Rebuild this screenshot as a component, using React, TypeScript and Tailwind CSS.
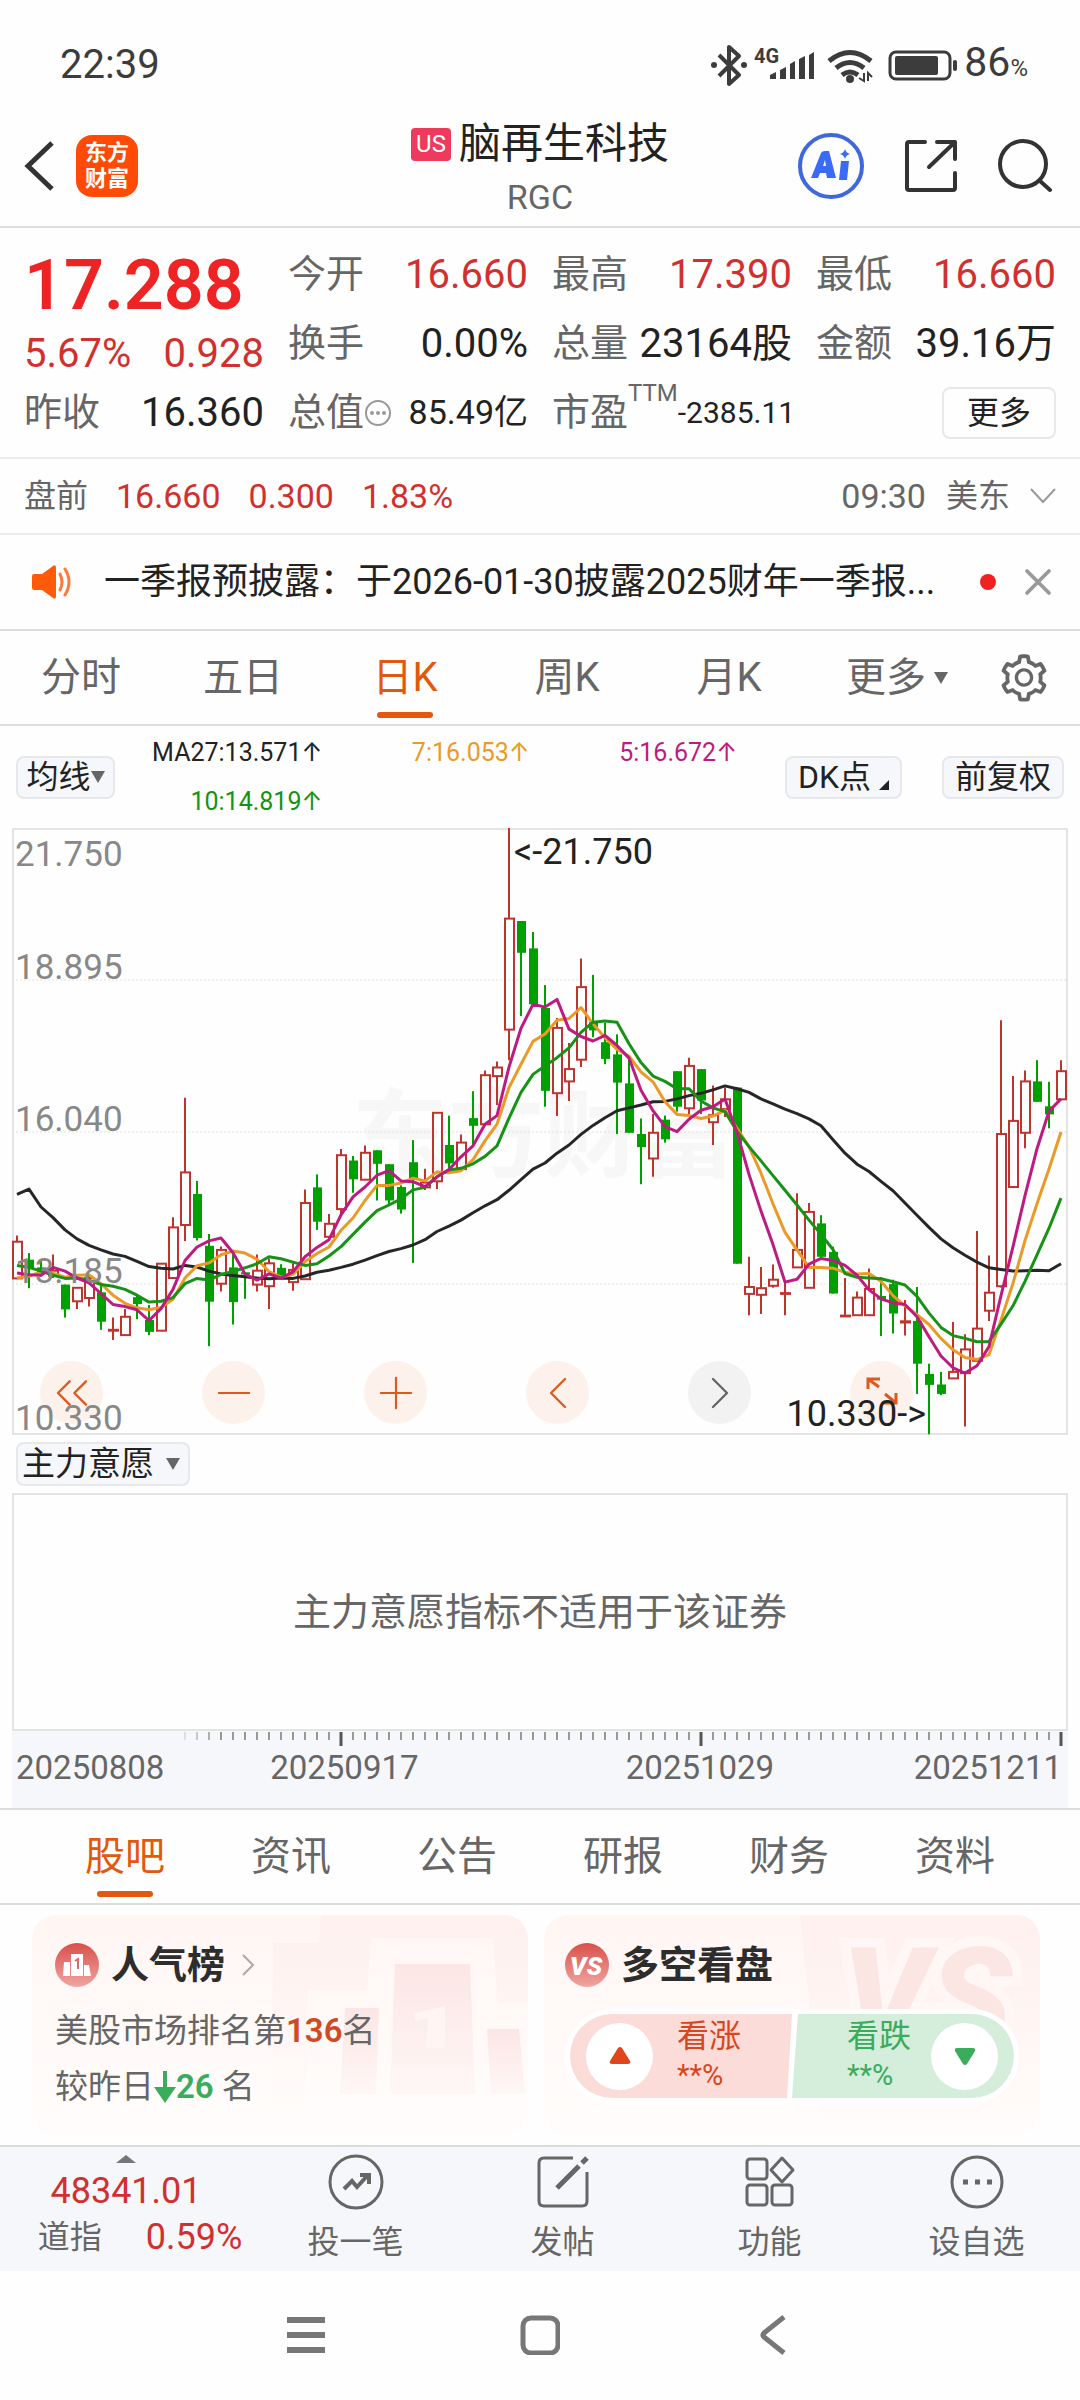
import React from "react";
import { ChevronLeft, ChevronRight, ChevronsLeft, Minus, Plus, X } from "lucide-react";
import { AiOutlineSetting } from "react-icons/ai";

type Candle = ["up" | "down", number, number, number, number];

// kind, high, body top, body bottom, low (chart levels, counted down from the top rule)
const CANDLES: Candle[] = [
  ["up", 1018, 1033, 1123, 1123], ["down", 1061, 1077, 1098, 1147], ["down", 1078, 1096, 1112, 1118],
  ["up", 1064, 1104, 1116, 1122], ["down", 1138, 1138, 1199, 1219], ["up", 1146, 1146, 1179, 1198],
  ["up", 1117, 1122, 1171, 1192], ["down", 1140, 1157, 1229, 1249], ["up", 1219, 1249, 1251, 1274],
  ["up", 1198, 1217, 1262, 1262], ["down", 1163, 1169, 1186, 1223], ["down", 1188, 1225, 1254, 1262],
  ["up", 1087, 1087, 1251, 1251], ["up", 973, 998, 1122, 1122], ["up", 680, 863, 992, 1031],
  ["down", 884, 916, 1024, 1030], ["down", 1014, 1043, 1180, 1289], ["up", 1045, 1053, 1136, 1155],
  ["down", 1064, 1096, 1181, 1236], ["down", 1109, 1108, 1113, 1173], ["up", 1064, 1104, 1138, 1155],
  ["up", 1074, 1086, 1142, 1198], ["down", 1088, 1097, 1117, 1122], ["up", 1086, 1102, 1132, 1153],
  ["up", 905, 938, 1125, 1125], ["down", 868, 900, 984, 1004], ["up", 965, 989, 1021, 1021],
  ["up", 806, 821, 953, 965], ["down", 823, 834, 880, 913], ["up", 797, 815, 881, 881],
  ["down", 809, 809, 842, 932], ["down", 843, 843, 932, 943], ["down", 895, 899, 954, 964],
  ["down", 784, 838, 878, 1085], ["up", 854, 888, 900, 906], ["up", 717, 717, 885, 904],
  ["down", 724, 796, 841, 856], ["up", 770, 790, 855, 858], ["down", 664, 730, 749, 800],
  ["up", 613, 625, 745, 745], ["up", 591, 606, 627, 698], ["up", 19, 241, 513, 588],
  ["down", 247, 247, 325, 480], ["down", 274, 314, 451, 451], ["down", 404, 460, 663, 702],
  ["up", 485, 509, 669, 725], ["up", 546, 610, 640, 688], ["up", 339, 409, 587, 605],
  ["down", 379, 495, 515, 532], ["down", 497, 544, 585, 598], ["down", 525, 574, 643, 769],
  ["down", 585, 645, 766, 766], ["down", 731, 769, 801, 892], ["up", 720, 766, 829, 874],
  ["down", 724, 734, 782, 790], ["down", 615, 615, 702, 714], ["up", 582, 602, 706, 722],
  ["down", 610, 610, 687, 720], ["up", 650, 723, 740, 796], ["up", 655, 684, 708, 727],
  ["down", 655, 655, 1087, 1087], ["up", 1070, 1144, 1161, 1213], ["up", 1095, 1147, 1163, 1210],
  ["up", 1089, 1126, 1141, 1146], ["up", 1132, 1159, 1161, 1213], ["up", 914, 1053, 1096, 1096],
  ["up", 938, 960, 1146, 1146], ["down", 968, 988, 1070, 1070], ["down", 1045, 1058, 1160, 1160],
  ["up", 1122, 1214, 1216, 1217], ["up", 1155, 1170, 1213, 1213], ["up", 1099, 1149, 1213, 1213],
  ["down", 1120, 1166, 1175, 1264], ["down", 1126, 1137, 1209, 1258], ["up", 1176, 1228, 1231, 1263],
  ["down", 1144, 1227, 1332, 1406], ["down", 1332, 1357, 1384, 1505], ["down", 1352, 1383, 1406, 1409],
  ["up", 1230, 1352, 1368, 1368], ["up", 1260, 1297, 1355, 1486], ["up", 1007, 1246, 1325, 1325],
  ["up", 1067, 1158, 1202, 1227], ["up", 490, 769, 1142, 1145], ["up", 627, 737, 899, 899],
  ["up", 613, 640, 766, 804], ["down", 588, 640, 690, 690], ["down", 641, 701, 721, 755],
  ["up", 588, 615, 684, 684],
];

const MA27 = [
  917, 904, 948, 974, 1004, 1026, 1042, 1053, 1063, 1069, 1081, 1094, 1098, 1100, 1091, 1095, 1105, 1112, 1116, 1119,
  1122, 1124, 1122, 1123, 1117, 1108, 1103, 1096, 1088, 1078, 1067, 1057, 1050, 1041, 1028, 1008, 995, 980, 962, 945,
  930, 907, 881, 855, 840, 816, 796, 770, 748, 729, 712, 705, 698, 690, 689, 683, 675, 669, 661, 651,
  658, 667, 683, 695, 708, 719, 732, 749, 783, 816, 843, 861, 885, 908, 938, 968, 998, 1026, 1048, 1066,
  1083, 1097, 1101, 1105, 1104, 1103, 1104, 1087,
];

const MA5 = [
  1110, 1114, 1115, 1096, 1105, 1122, 1134, 1160, 1187, 1192, 1200, 1226, 1197, 1150, 1079, 1046, 1031, 1024, 1060, 1112,
  1127, 1112, 1122, 1107, 1070, 1047, 1028, 967, 923, 899, 870, 859, 884, 886, 898, 874, 856, 825, 798, 745,
  724, 605, 510, 451, 458, 439, 512, 530, 541, 527, 552, 583, 662, 712, 751, 763, 733, 711, 702, 683,
  765, 868, 958, 1040, 1132, 1125, 1088, 1074, 1079, 1091, 1115, 1151, 1173, 1183, 1187, 1217, 1266, 1313, 1342, 1355,
  1337, 1290, 1165, 1045, 920, 805, 713, 683,
];

const MA7 = [
  1122, 1117, 1108, 1110, 1120, 1115, 1114, 1136, 1164, 1184, 1195, 1200, 1194, 1174, 1122, 1092, 1085, 1065, 1056, 1061,
  1076, 1106, 1120, 1113, 1082, 1062, 1046, 1005, 975, 932, 895, 895, 889, 877, 884, 862, 864, 859, 832, 786,
  745, 655, 598, 542, 524, 490, 486, 459, 499, 533, 562, 578, 617, 641, 690, 721, 724, 731, 725, 711,
  755, 800, 865, 940, 1010, 1053, 1096, 1096, 1098, 1108, 1112, 1111, 1130, 1165, 1190, 1212, 1236, 1270, 1298, 1317,
  1322, 1310, 1225, 1135, 1030, 940, 855, 764,
];

const MA10 = [
  1091, 1096, 1105, 1115, 1123, 1122, 1127, 1138, 1142, 1150, 1164, 1181, 1179, 1170, 1136, 1123, 1127, 1113, 1106, 1097,
  1087, 1070, 1075, 1083, 1091, 1087, 1068, 1045, 1015, 985, 957, 943, 928, 906, 900, 874, 857, 853, 842, 824,
  798, 730, 667, 623, 602, 582, 558, 520, 495, 492, 495, 548, 594, 627, 640, 658, 658, 688, 705, 714,
  762, 800, 835, 871, 907, 943, 980, 1015, 1052, 1111, 1120, 1122, 1124, 1131, 1139, 1167, 1208, 1243, 1263, 1270,
  1278, 1278, 1235, 1190, 1130, 1065, 1000, 926,
];

const AXIS_LABELS = [
  { y: 38, text: "21.750" },
  { y: 151, text: "18.895" },
  { y: 303, text: "16.040" },
  { y: 455, text: "13.185" },
  { y: 602, text: "10.330" },
];

const RED = "#be3530";

const xAt = (i: number) => 5 + i * 12;
const yAt = (level: number) => Math.round((level - 19) * 4.08) / 10;
const toPoints = (levels: number[]) => levels.map((v, i) => `${xAt(i)},${yAt(v)}`).join(" ");

function StatusBar() {
  return (
    <div className="flex h-[130px] items-center justify-between pl-[60px] pr-[52px] text-[#3c3c3c]">
      <span className="text-[40px]">22:39</span>
      <div className="flex items-center">
        <svg viewBox="0 0 250 44" className="h-11 w-[250px] fill-current" aria-hidden="true">
          <path d="M9 12 L29 32 L19 41 V4 L29 13 L9 33" fill="none" stroke="currentColor" strokeWidth="4" strokeLinejoin="round" />
          <circle cx="4" cy="22" r="3" />
          <circle cx="34" cy="22" r="3" />
          <text x="44" y="20" fontSize="20" fontWeight="700">4G</text>
          <path d="M60 36 V32 L66 29 V36Z M70 36 V27 L76 24 V36Z M80 36 V21 L85 18 V36Z M89 36 V16 L95 13 V36Z M99 36 V12 L104 9 V36Z" />
          <g fill="none" stroke="currentColor" strokeWidth="5">
            <path d="M119 18 Q140 1 161 18" />
            <path d="M126 25 Q140 14 154 25" />
            <path d="M132 32 Q140 26 148 32" />
          </g>
          <circle cx="140" cy="36" r="4" />
          <path d="M154 30 V38 L149 35 M158 38 V30 L162 34" fill="none" stroke="currentColor" strokeWidth="2" />
          <rect x="180" y="9" width="60" height="27" rx="6" fill="none" stroke="currentColor" strokeWidth="3" />
          <rect x="185" y="13" width="43" height="19" rx="2" />
          <rect x="243" y="17" width="4" height="11" rx="2" />
        </svg>
        <span className="flex items-baseline pl-1 text-[41px] leading-[44px]">
          86<span className="text-[24px]">%</span>
        </span>
      </div>
    </div>
  );
}

function Header() {
  return (
    <header className="grid h-[98px] grid-cols-[1fr_auto_1fr] items-start border-b-2 border-[#dcdcdc]">
      <div className="flex items-center gap-[18px] pl-6 pt-[5px]">
        <button type="button" aria-label="返回" className="text-[#333]">
          <svg viewBox="0 0 34 54" className="h-[54px] w-[34px]" fill="none" stroke="currentColor" strokeWidth="5">
            <path d="M28 4 L4 27 L28 50" />
          </svg>
        </button>
        <a
          href="#home"
          className="flex h-[62px] w-[62px] flex-col items-center justify-center rounded-2xl bg-[#ff4b05] text-[22px] font-bold leading-[26px] text-white"
        >
          <span>东方</span>
          <span>财富</span>
        </a>
      </div>
      <div className="-mt-4 flex flex-col items-center">
        <h1 className="flex items-center gap-2 text-[42px] leading-[60px] text-[#222]">
          <span className="flex h-[33px] w-10 items-center justify-center rounded bg-[#ee3a5c] text-2xl text-white">US</span>
          脑再生科技
        </h1>
        <span className="text-[34px] leading-[46px] text-[#666]">RGC</span>
      </div>
      <div className="flex items-center justify-end gap-10 pr-7 pt-[3px]">
        <button type="button" aria-label="Ai">
          <svg viewBox="0 0 66 66" className="h-[66px] w-[66px]">
            <circle cx="33" cy="33" r="31" fill="none" stroke="#3f68dc" strokeWidth="4" />
            <path d="M13 45 L23 20 Q24 18 27 18 H31 L38 45 H29 L28 40 H22 L20 45Z M25 33 H28 L27 27Z" fill="#3a6bf5" fillRule="evenodd" />
            <path d="M43 28 H51 L49 47 H41Z M47 16 Q48 20 52 21 Q48 22 47 26 Q46 22 42 21 Q46 20 47 16Z" fill="#3a6bf5" />
          </svg>
        </button>
        <button type="button" aria-label="分享" className="text-[#333]">
          <svg viewBox="0 0 54 54" className="h-[54px] w-[54px]" fill="none" stroke="currentColor" strokeWidth="4" strokeLinecap="round" strokeLinejoin="round">
            <path d="M21 3 H5 Q3 3 3 5 V49 Q3 51 5 51 H49 Q51 51 51 49 V34" />
            <path d="M33 3 H51 V20 M51 3 L25 28" />
          </svg>
        </button>
        <button type="button" aria-label="搜索" className="text-[#333]">
          <svg viewBox="0 0 54 54" className="h-[54px] w-[54px]" fill="none" stroke="currentColor" strokeWidth="4" strokeLinecap="round">
            <circle cx="25" cy="25" r="23" />
            <path d="M42 42 L52 51" />
          </svg>
        </button>
      </div>
    </header>
  );
}

function Stat({ label, value, red }: { label: React.ReactNode; value: string; red?: boolean }) {
  return (
    <div className="flex h-[69px] items-center justify-between whitespace-nowrap">
      <span className="text-[38px] text-[#666]">{label}</span>
      <span className={red ? "text-[40px] text-[#d2302f]" : "text-[40px] text-[#222]"}>{value}</span>
    </div>
  );
}

function Quote() {
  return (
    <section className="grid grid-cols-4 gap-6 border-b-2 border-[#ececec] px-6 pb-[10px] pt-3">
      <div>
        <div className="flex h-[90px] items-center text-[70px] font-semibold text-[#ee2424]">17.288</div>
        <div className="flex h-12 items-center justify-between text-[40px] text-[#d2302f]">
          <span>5.67%</span>
          <span>0.928</span>
        </div>
        <Stat label="昨收" value="16.360" />
      </div>
      <div>
        <Stat label="今开" value="16.660" red />
        <Stat label="换手" value="0.00%" />
        <div className="flex h-[69px] items-center justify-between whitespace-nowrap">
          <span className="flex items-center text-[38px] text-[#666]">
            总值
            <svg viewBox="0 0 28 28" className="h-7 w-7" fill="#999">
              <circle cx="14" cy="14" r="12" fill="none" stroke="#999" strokeWidth="2" />
              <circle cx="8" cy="14" r="2" />
              <circle cx="14" cy="14" r="2" />
              <circle cx="20" cy="14" r="2" />
            </svg>
          </span>
          <span className="text-[34px] text-[#222]">85.49亿</span>
        </div>
      </div>
      <div>
        <Stat label="最高" value="17.390" red />
        <Stat label="总量" value="23164股" />
        <div className="flex h-[69px] items-center justify-between whitespace-nowrap">
          <span className="flex items-center text-[38px] text-[#666]">
            市盈<sup className="-top-5 text-2xl">TTM</sup>
          </span>
          <span className="text-[30px] text-[#222]">-2385.11</span>
        </div>
      </div>
      <div>
        <Stat label="最低" value="16.660" red />
        <Stat label="金额" value="39.16万" />
        <div className="flex h-[69px] items-center justify-end">
          <button type="button" className="h-[52px] w-[114px] rounded-lg border-2 border-[#e8e8e8] text-[32px] leading-none text-[#222]">
            更多
          </button>
        </div>
      </div>
    </section>
  );
}

function PreMarket() {
  return (
    <section className="flex h-[76px] items-center justify-between border-b-2 border-[#ececec] px-6 text-[34px] text-[#666]">
      <div className="flex items-center gap-7 text-[#d2302f]">
        <span className="text-[32px] text-[#666]">盘前</span>
        <span>16.660</span>
        <span>0.300</span>
        <span>1.83%</span>
      </div>
      <button type="button" className="flex items-center gap-5">
        <span>09:30</span>
        <span className="text-[32px]">美东</span>
        <svg viewBox="0 0 26 16" className="h-4 w-[26px]" fill="none" stroke="#999" strokeWidth="2">
          <path d="M1 1 L13 14 L25 1" />
        </svg>
      </button>
    </section>
  );
}

function News() {
  return (
    <section className="flex h-24 items-center border-b-2 border-[#dcdcdc] pl-8 pr-5">
      <svg viewBox="0 0 40 34" className="h-[34px] w-10 shrink-0" aria-hidden="true">
        <path d="M2 9 Q0 9 0 11 V23 Q0 25 2 25 H10 L21 33 Q24 35 24 31 V3 Q24 -1 21 1 L10 9Z" fill="#ff5a0a" />
        <path d="M28 9 Q32 17 28 25 M33 4 Q41 17 33 30" fill="none" stroke="#ff7a3a" strokeWidth="3" strokeLinecap="round" />
      </svg>
      <a href="#news" className="ml-8 min-w-0 flex-1 truncate text-[36px] text-[#222]">
        一季报预披露：于2026-01-30披露2025财年一季报...
      </a>
      <span className="ml-4 h-4 w-4 shrink-0 rounded-full bg-[#ee2222]" />
      <button type="button" aria-label="关闭" className="ml-5 text-[#999]">
        <X className="h-11 w-11" strokeWidth={2} />
      </button>
    </section>
  );
}

function PeriodTabs() {
  const tabs = ["分时", "五日", "日K", "周K", "月K"];
  return (
    <nav className="grid h-[95px] grid-cols-[repeat(6,15%)_10%] border-b-2 border-[#dcdcdc] text-[40px] text-[#666]">
      {tabs.map((tab) => (
        <button
          key={tab}
          type="button"
          className={tab === "日K" ? "relative text-[#e2580c]" : "relative"}
        >
          {tab}
          {tab === "日K" && <span className="absolute bottom-[6px] left-1/2 h-[6px] w-14 -translate-x-1/2 rounded-full bg-[#e2580c]" />}
        </button>
      ))}
      <button type="button" className="flex items-center justify-center gap-2 pl-3">
        更多
        <svg viewBox="0 0 14 12" className="h-3 w-[14px]" fill="currentColor"><path d="M0 0 H14 L7 12Z" /></svg>
      </button>
      <button type="button" aria-label="设置" className="flex items-center justify-center pr-1">
        <AiOutlineSetting className="h-[54px] w-[54px]" />
      </button>
    </nav>
  );
}

function Legend() {
  const chip = "flex h-[43px] shrink-0 items-center justify-center rounded-lg border-2 border-[#e6e8eb] bg-[#f6f7fa] text-[32px] text-[#222]";
  const arrow = <span className="font-['Inter']">↑</span>;
  return (
    <div className="flex h-[102px] items-center justify-between px-4">
      <button type="button" className={`${chip} w-[99px]`}>
        均线
        <svg viewBox="0 0 14 12" className="h-3 w-[14px]" fill="#666"><path d="M0 0 H14 L7 12Z" /></svg>
      </button>
      <div className="grid flex-1 grid-cols-3 pr-12 text-right text-[25px] leading-[49px]">
        <span className="whitespace-nowrap text-[#222]">MA27:13.571{arrow}</span>
        <span className="text-[#eb9a28]">7:16.053{arrow}</span>
        <span className="text-[#bd1b80]">5:16.672{arrow}</span>
        <span className="text-[#169316]">10:14.819{arrow}</span>
      </div>
      <div className="flex gap-10">
        <button type="button" className={`${chip} w-[117px] gap-2`}>
          DK点
          <svg viewBox="0 0 10 10" className="mt-4 h-[10px] w-[10px]" fill="#222"><path d="M10 0 V10 H0Z" /></svg>
        </button>
        <button type="button" className={`${chip} w-[122px]`}>前复权</button>
      </div>
    </div>
  );
}

function MaLine({ levels, color }: { levels: number[]; color: string }) {
  return <polyline points={toPoints(levels)} fill="none" stroke={color} strokeWidth="3" strokeLinejoin="round" />;
}

function KLine() {
  return (
    <svg viewBox="0 0 1056 607" className="block h-auto w-full">
      <text x="340" y="341" fontSize="96" fontWeight="700" fill="#f7f7f7">东方财富</text>
      {[152, 304, 456].map((y) => (
        <path key={y} d={`M0 ${y} H1056`} stroke="#e0e0e0" strokeWidth="1" strokeDasharray="2 2" />
      ))}
      <rect x="1" y="1" width="1054" height="605" fill="none" stroke="#e4e4e4" strokeWidth="2" />
      {CANDLES.map(([kind, high, top, bottom, low], i) => {
        const x = xAt(i);
        const h = yAt(bottom) - yAt(top);
        if (kind === "down") {
          return (
            <g key={i} fill="#00a000">
              <rect x={x - 1} y={yAt(high)} width="2" height={yAt(low) - yAt(high)} />
              <rect x={x - 4} y={yAt(top)} width="9" height={h} />
            </g>
          );
        }
        return (
          <g key={i} stroke={RED} strokeWidth="2" fill="none">
            <path d={`M${x} ${yAt(high)} V${yAt(top)} M${x} ${yAt(bottom)} V${yAt(low)}`} />
            <rect x={x - 4} y={yAt(top)} width="9" height={h} />
          </g>
        );
      })}
      <MaLine levels={MA27} color="#262626" />
      <MaLine levels={MA7} color="#eb9a28" />
      <MaLine levels={MA10} color="#169316" />
      <MaLine levels={MA5} color="#bd1b80" />
    </svg>
  );
}

function ExpandIcon() {
  return (
    <svg viewBox="0 0 32 32" className="h-8 w-8" fill="none" stroke="currentColor" strokeWidth="3">
      <path d="M14 2 H2 V12 M2 2 L13 10 M30 16 V26 H18 M30 26 L19 17" />
    </svg>
  );
}

function ChartControls() {
  const round = "flex h-[63px] w-[63px] items-center justify-center rounded-full";
  const items = [
    { label: "最早", icon: <ChevronsLeft className="h-14 w-14" strokeWidth={1} /> },
    { label: "缩小", icon: <Minus className="h-[52px] w-[52px]" strokeWidth={1} /> },
    { label: "放大", icon: <Plus className="h-[52px] w-[52px]" strokeWidth={1} /> },
    { label: "向左", icon: <ChevronLeft className="h-14 w-14" strokeWidth={1} /> },
    { label: "向右", icon: <ChevronRight className="h-14 w-14" strokeWidth={1} /> },
    { label: "全屏", icon: <ExpandIcon /> },
  ];
  return (
    <div className="absolute bottom-[11px] left-7 flex gap-[99px]">
      {items.map(({ label, icon }) => (
        <button
          key={label}
          type="button"
          aria-label={label}
          className={label === "向右" ? `${round} bg-[#f2f2f2] text-[#666]` : `${round} bg-[#fdeee6]/80 text-[#dc5a1e]`}
        >
          {icon}
        </button>
      ))}
    </div>
  );
}

function Chart() {
  const ticks = Array.from({ length: 74 }, (_, i) => 1049 - i * 12);
  return (
    <section className="px-3">
      <div className="relative">
        <KLine />
        <ChartControls />
        <svg viewBox="0 0 1056 607" className="pointer-events-none absolute inset-0 h-auto w-full overflow-visible">
          {AXIS_LABELS.map(({ y, text }) => (
            <text key={text} x="3" y={y} fontSize="35" fill="#888">{text}</text>
          ))}
          <g fontSize="36" fill="#222">
            <text x="502" y="36">&lt;-21.750</text>
            <text x="914" y="598" textAnchor="end">10.330-&gt;</text>
          </g>
        </svg>
      </div>
      <div className="flex h-[58px] items-center pl-1">
        <button type="button" className="flex h-11 items-center gap-3 rounded-lg border-2 border-[#e6e8eb] bg-[#f6f7fa] px-1 pr-2 text-[33px] text-[#222]">
          主力意愿
          <svg viewBox="0 0 14 12" className="h-3 w-[14px]" fill="#666"><path d="M0 0 H14 L7 12Z" /></svg>
        </button>
      </div>
      <div className="flex h-[238px] items-center justify-center border-2 border-[#e4e4e4] text-[38px] text-[#666]">
        主力意愿指标不适用于该证券
      </div>
      <div className="relative h-[77px] bg-[#f6f7fa] text-[33px] text-[#666]">
        <svg viewBox="0 0 1056 16" className="block h-auto w-full">
          {ticks.map((x, i) => {
            const major = i % 30 === 0;
            return (
              <path
                key={x}
                d={`M${x} 1 V${major ? 15 : 9}`}
                stroke={major ? "#555" : "#999"}
                strokeWidth={major ? 3 : 2}
                opacity={i > 70 ? (74 - i) / 4 : 1}
              />
            );
          })}
        </svg>
        <div className="grid grid-cols-[24.3%_34%_1fr_auto] pl-1 pr-[6px] leading-[42px]">
          <span>20250808</span>
          <span>20250917</span>
          <span>20251029</span>
          <span>20251211</span>
        </div>
      </div>
    </section>
  );
}

function ContentTabs() {
  return (
    <nav className="grid h-[97px] grid-cols-6 border-y-2 border-[#dcdcdc] px-[42px] text-[40px] text-[#666]">
      {["股吧", "资讯", "公告", "研报", "财务", "资料"].map((tab) => (
        <button key={tab} type="button" className={tab === "股吧" ? "relative text-[#e2580c]" : "relative"}>
          {tab}
          {tab === "股吧" && <span className="absolute bottom-[6px] left-1/2 h-[6px] w-14 -translate-x-1/2 rounded-full bg-[#e2580c]" />}
        </button>
      ))}
    </nav>
  );
}

function PopularityCard() {
  return (
    <article className="relative h-[220px] overflow-hidden rounded-3xl bg-gradient-to-b from-[#fff6f4] to-[#fffdfc] pl-[23px] pt-6">
      <svg viewBox="0 0 255 220" className="absolute right-0 top-0 h-[220px] w-[255px]" aria-hidden="true">
        <defs>
          <linearGradient id="haze" x1="0" y1="0" x2="0" y2="1">
            <stop offset="0" stopColor="#fef1ef" />
            <stop offset="1" stopColor="#fef1ef" stopOpacity="0" />
          </linearGradient>
          <linearGradient id="halo" x1="0" y1="0" x2="0" y2="1">
            <stop offset="0" stopColor="#fff7f5" />
            <stop offset="1" stopColor="#fffcfb" />
          </linearGradient>
          <linearGradient id="bars" x1="0" y1="0" x2="0" y2="1">
            <stop offset="0" stopColor="#fbe6e5" />
            <stop offset="1" stopColor="#fef7f6" />
          </linearGradient>
        </defs>
        <path d="M48 0 H255 V190 H0 V28 H46Z" fill="url(#haze)" />
        <path d="M98 23 H220 L225 88 H255 V190 H32 L35 75 H94Z" fill="url(#halo)" />
        <g fill="url(#bars)">
          <path d="M122 49 H197 L202 179 H117Z" />
          <path d="M72 93 H106 L103 179 H67Z" />
          <path d="M214 114 H246 L252 179 H218Z" />
        </g>
        <path d="M142 98 L172 91 L172 133 H153 L155 103 L142 106Z" fill="#fff5f3" />
      </svg>
      <h2 className="relative text-[38px] font-bold leading-[52px] text-[#2d2d2d]">
        <a href="#rank" className="flex items-center">
          <svg viewBox="0 0 44 44" className="mr-3 h-11 w-11" aria-hidden="true">
            <defs>
              <linearGradient id="badge" x1="0" y1="0" x2="0" y2="1">
                <stop offset="0" stopColor="#d9504b" />
                <stop offset="1" stopColor="#f0a5a1" />
              </linearGradient>
            </defs>
            <circle cx="22" cy="22" r="22" fill="url(#badge)" />
            <path d="M16 11 H28 V33 H16Z M9 19 H15 V33 H8Z M29 22 H34 L36 33 H29Z" fill="#fff" />
            <path d="M20 18 L23 16 V26" fill="none" stroke="#dc6a66" strokeWidth="2" />
          </svg>
          人气榜
          <svg viewBox="0 0 14 22" className="ml-4 h-[22px] w-[14px]" fill="none" stroke="#aaa" strokeWidth="2">
            <path d="M2 1 L12 11 L2 21" />
          </svg>
        </a>
      </h2>
      <p className="relative mt-4 text-[33px] leading-[48px] text-[#666]">
        美股市场排名第<b className="font-semibold text-[#d04a22]">136</b>名
      </p>
      <p className="relative mt-2 flex items-center text-[33px] leading-[48px] text-[#666]">
        较昨日
        <svg viewBox="0 0 22 32" className="h-8 w-[22px]" fill="#3bab5c"><path d="M9 0 H13 V16 H22 L11 32 L0 16 H9Z" /></svg>
        <b className="mr-2 font-semibold text-[#3bab5c]">26</b>名
      </p>
    </article>
  );
}

function LongShortCard() {
  return (
    <article className="relative h-[220px] overflow-hidden rounded-3xl bg-gradient-to-b from-[#fff6f4] to-[#fffdfc] px-[21px] pt-6">
      <svg viewBox="0 0 242 220" className="absolute right-0 top-0 h-[220px] w-[242px]" aria-hidden="true">
        <path d="M2 0 H242 V210 H24Z" fill="url(#haze)" />
        <text x="44" y="130" fontSize="136" fontWeight="900" fontStyle="italic" fill="#fce6e4" stroke="#fff7f5" strokeWidth="20" paintOrder="stroke">
          VS
        </text>
      </svg>
      <h2 className="relative flex items-center text-[38px] font-bold leading-[52px] text-[#2d2d2d]">
        <svg viewBox="0 0 44 44" className="mr-3 h-11 w-11" aria-hidden="true">
          <circle cx="22" cy="22" r="22" fill="url(#badge)" />
          <text x="21" y="32" fontSize="26" fontWeight="900" fontStyle="italic" fill="#fff" textAnchor="middle">VS</text>
        </svg>
        多空看盘
      </h2>
      <div className="relative mt-[18px] flex h-[94px] rounded-full border-[5px] border-white/80 bg-white text-[32px] leading-[42px]">
        <button
          type="button"
          className="flex flex-1 items-center gap-6 rounded-l-full bg-[#fcdcd8] pl-4 text-left text-[#d8461c] [clip-path:polygon(0_0,100%_0,calc(100%-5px)_100%,0_100%)]"
        >
          <span className="flex h-[67px] w-[67px] items-center justify-center rounded-full bg-white">
            <svg viewBox="0 0 22 18" className="h-[18px] w-[22px]" fill="#e0461a"><path d="M9 1 Q11 -1 13 1 L21 14 Q22 17 19 17 H3 Q0 17 1 14Z" /></svg>
          </span>
          <span className="pb-1">
            看涨
            <span className="block text-[29px] leading-9">**%</span>
          </span>
        </button>
        <button
          type="button"
          className="flex flex-1 items-center justify-end gap-5 rounded-r-full bg-[#d5eddb] pr-4 text-left text-[#3bab5c] [clip-path:polygon(6px_0,100%_0,100%_100%,0_100%)]"
        >
          <span className="pb-1">
            看跌
            <span className="block text-[29px] leading-9">**%</span>
          </span>
          <span className="flex h-[67px] w-[67px] items-center justify-center rounded-full bg-white">
            <svg viewBox="0 0 22 18" className="h-[18px] w-[22px] rotate-180" fill="#3bab5c"><path d="M9 1 Q11 -1 13 1 L21 14 Q22 17 19 17 H3 Q0 17 1 14Z" /></svg>
          </span>
        </button>
      </div>
    </article>
  );
}

function BottomBar() {
  const icon = "h-[60px] w-[60px]";
  const actions = [
    {
      label: "投一笔",
      icon: (
        <svg viewBox="0 0 60 60" className={icon} fill="none" stroke="currentColor" strokeWidth="3">
          <circle cx="30" cy="30" r="26" />
          <path d="M18 37 L26 29 L31 35 L42 23 M34 23 H43 V32" strokeWidth="4" />
        </svg>
      ),
    },
    {
      label: "发帖",
      icon: (
        <svg viewBox="0 0 60 60" className={icon} fill="none" stroke="currentColor" strokeWidth="3">
          <path d="M40 6 H11 Q6 6 6 11 V49 Q6 54 11 54 H49 Q54 54 54 49 V20" />
          <path d="M24 36 L46 14 M49 11 L54 6" strokeWidth="5" />
        </svg>
      ),
    },
    {
      label: "功能",
      icon: (
        <svg viewBox="0 0 60 60" className={icon} fill="none" stroke="currentColor" strokeWidth="3" strokeLinejoin="round">
          <rect x="7" y="7" width="20" height="20" rx="3" />
          <rect x="7" y="33" width="20" height="20" rx="3" />
          <rect x="32" y="33" width="20" height="20" rx="3" />
          <path d="M42 6 L53 18 L42 30 L31 18Z" />
        </svg>
      ),
    },
    {
      label: "设自选",
      icon: (
        <svg viewBox="0 0 60 60" className={icon} fill="none" stroke="currentColor" strokeWidth="3">
          <circle cx="30" cy="30" r="25" />
          <path d="M16 30 H21 M28 30 H33 M40 30 H45" strokeWidth="5" />
        </svg>
      ),
    },
  ];

  return (
    <footer className="grid h-[126px] grid-cols-[252px_repeat(4,1fr)] border-t-2 border-[#dcdcdc] bg-[#f6f7fa] text-[32px] text-[#666]">
      <button type="button" className="flex flex-col items-center pt-2">
        <svg viewBox="0 0 20 8" className="h-2 w-5" fill="#777"><path d="M10 0 L20 8 H0Z" /></svg>
        <span className="mt-1 text-[36px] leading-[48px] text-[#d2302f]">48341.01</span>
        <span className="flex gap-11 pl-7 leading-[44px]">
          道指 <span className="text-[36px] text-[#d2302f]">0.59%</span>
        </span>
      </button>
      {actions.map((action) => (
        <button key={action.label} type="button" className="flex flex-col items-center pt-[5px]">
          {action.icon}
          <span className="mt-1 leading-[52px]">{action.label}</span>
        </button>
      ))}
    </footer>
  );
}

function SystemNav() {
  return (
    <nav className="flex h-[128px] items-center justify-center gap-[194px] text-[#777]">
      <button type="button" aria-label="菜单">
        <svg viewBox="0 0 40 40" className="h-10 w-10" stroke="currentColor" strokeWidth="6">
          <path d="M1 5 H39 M1 20 H39 M1 35 H39" />
        </svg>
      </button>
      <button type="button" aria-label="主页">
        <svg viewBox="0 0 40 40" className="h-10 w-10" fill="none" stroke="currentColor" strokeWidth="5">
          <rect x="3" y="3" width="35" height="35" rx="8" />
        </svg>
      </button>
      <button type="button" aria-label="后退">
        <svg viewBox="0 0 40 40" className="h-10 w-10" fill="none" stroke="currentColor" strokeWidth="5" strokeLinejoin="round">
          <path d="M30 2 L10 18 Q8 20 10 22 L30 38" />
        </svg>
      </button>
    </nav>
  );
}

export default function App() {
  return (
    <div className="w-full bg-[#fefefe] font-['Roboto','Noto_Sans_CJK_SC',sans-serif]">
      <StatusBar />
      <Header />
      <main>
        <Quote />
        <PreMarket />
        <News />
        <PeriodTabs />
        <Legend />
        <Chart />
        <ContentTabs />
        <section className="grid grid-cols-2 gap-4 py-[10px] pl-8 pr-10">
          <PopularityCard />
          <LongShortCard />
        </section>
      </main>
      <BottomBar />
      <SystemNav />
    </div>
  );
}
